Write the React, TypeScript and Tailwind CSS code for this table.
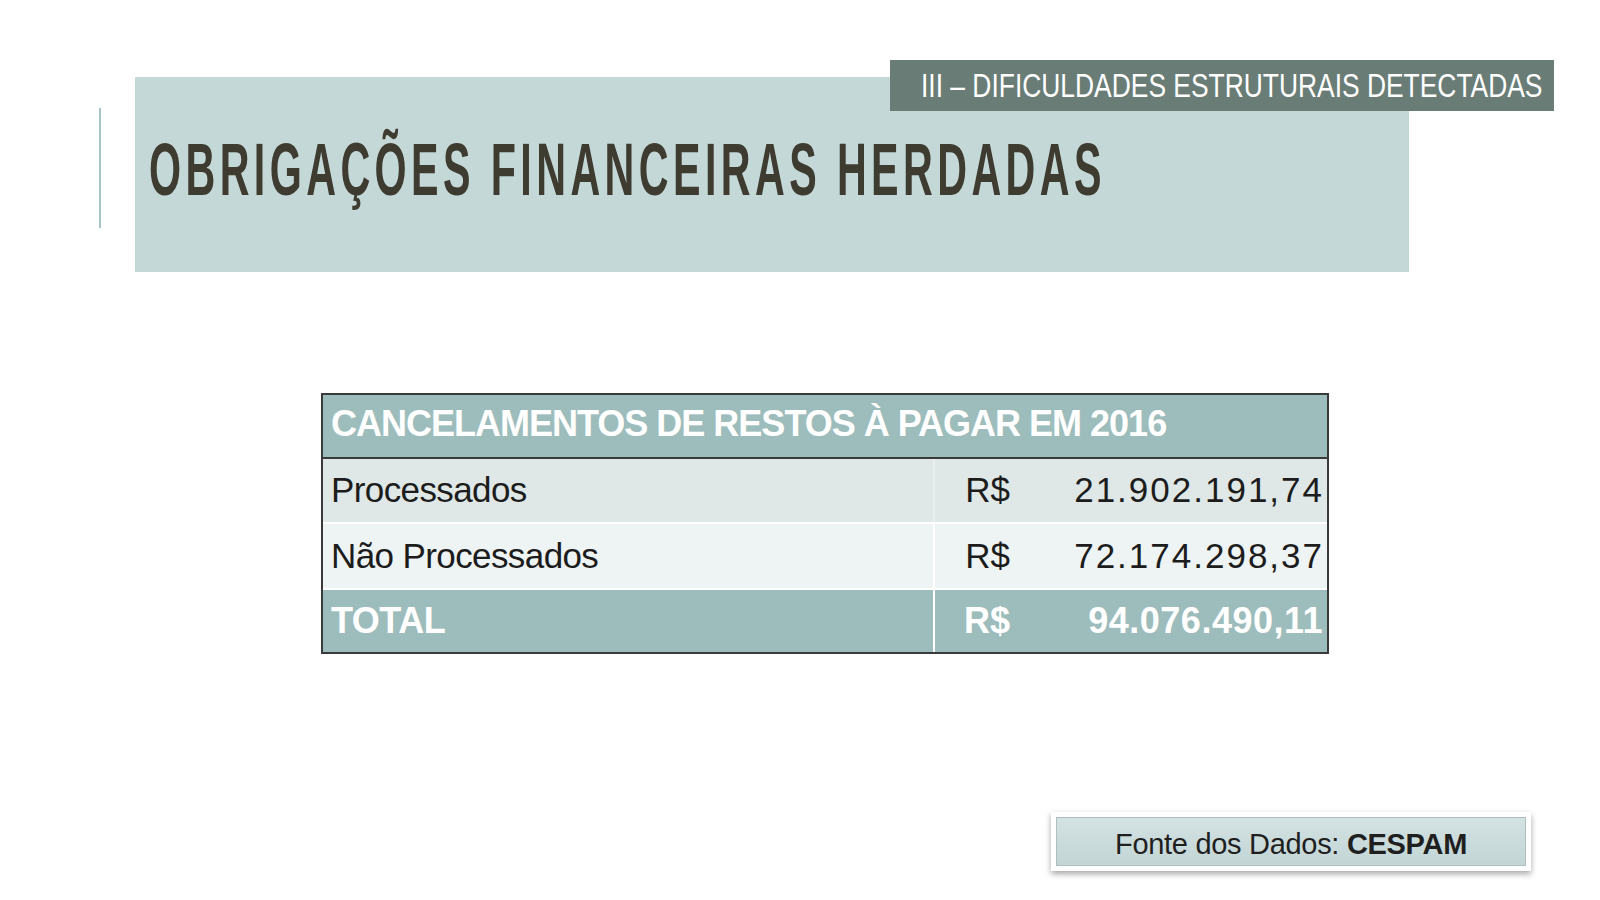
export default function App() {
  return (
    <div className="relative w-[1600px] h-[900px] bg-white overflow-hidden font-['Liberation_Sans',Arial,sans-serif]">
      {/* Faixa do título */}
      <div className="flex pt-[77px]">
        <div className="ml-[99px] mt-[31px] w-[2px] h-[120px] bg-[#a9c4c4]" />
        <div className="ml-[34px] w-[1274px] h-[195px] bg-[#c5d8d8] pl-[14px] pt-[55px]">
          <span className="inline-block origin-left scale-x-[0.55] whitespace-nowrap text-[75px] leading-[75px] font-bold tracking-[8px] text-[#3e3b30]">
            OBRIGAÇÕES FINANCEIRAS HERDADAS
          </span>
        </div>
      </div>

      {/* Selo da seção */}
      <div className="absolute left-[890px] top-[60px] w-[664px] h-[51px] bg-[#6a7c76] pl-[31px] overflow-hidden">
        <span className="inline-block origin-left scale-x-[0.8] whitespace-nowrap text-[33px] leading-[51px] text-white">
          III – DIFICULDADES ESTRUTURAIS DETECTADAS
        </span>
      </div>

      {/* Tabela */}
      <div className="ml-[321px] mt-[121px] w-[1008px] border-2 border-[#3a3a3a] text-[35px]">
        <div className="h-[64px] bg-[#9dbcbc] border-b-2 border-[#3a3a3a] flex items-center pl-[8px] pb-[4px] text-[36px] text-white font-bold tracking-[-1px] whitespace-nowrap">
          CANCELAMENTOS DE RESTOS À PAGAR EM 2016
        </div>
        <Row label="Processados" value="21.902.191,74" bg="bg-[#dfe7e7]" sep="border-[#e9efef]" />
        <div className="h-[2px] bg-white" />
        <Row label="Não Processados" value="72.174.298,37" bg="bg-[#eef3f3]" sep="border-white" tall />
        <div className="h-[2px] bg-white" />
        <div className="h-[62px] bg-[#9dbcbc] flex text-white font-bold text-[36px]">
          <div className="w-[610px] flex items-center pl-[8px] tracking-[-0.5px]">TOTAL</div>
          <div className="w-[83px] border-l-2 border-white flex items-center justify-end pr-[6px]">R$</div>
          <div className="flex-1 flex items-center justify-end pr-[4px] tracking-[0.5px]">94.076.490,11</div>
        </div>
      </div>

      {/* Fonte */}
      <div className="ml-[1051px] mt-[158px] w-[480px] h-[59px] bg-white p-[5px] shadow-[0_3px_6px_rgba(0,0,0,0.35)]">
        <div className="h-full border border-[#aebfbf] bg-gradient-to-b from-[#d3e2e2] to-[#c3d5d5] flex items-center justify-center pt-[6px] text-[29px] text-[#1f1f1f] tracking-[-0.3px]">
          Fonte dos Dados:&nbsp;<span className="font-bold">CESPAM</span>
        </div>
      </div>
    </div>
  );
}

function Row({ label, value, bg, sep, tall = false }: { label: string; value: string; bg: string; sep: string; tall?: boolean }) {
  return (
    <div className={`${tall ? 'h-[64px]' : 'h-[63px]'} ${bg} flex text-[#1c1c1c]`}>
      <div className="w-[610px] flex items-center pl-[8px] tracking-[-0.6px] whitespace-nowrap">{label}</div>
      <div className={`w-[83px] border-l-2 ${sep} flex items-center justify-end pr-[6px]`}>R$</div>
      <div className="flex-1 flex items-center justify-end pr-[3px] tracking-[2px]">{value}</div>
    </div>
  );
}
